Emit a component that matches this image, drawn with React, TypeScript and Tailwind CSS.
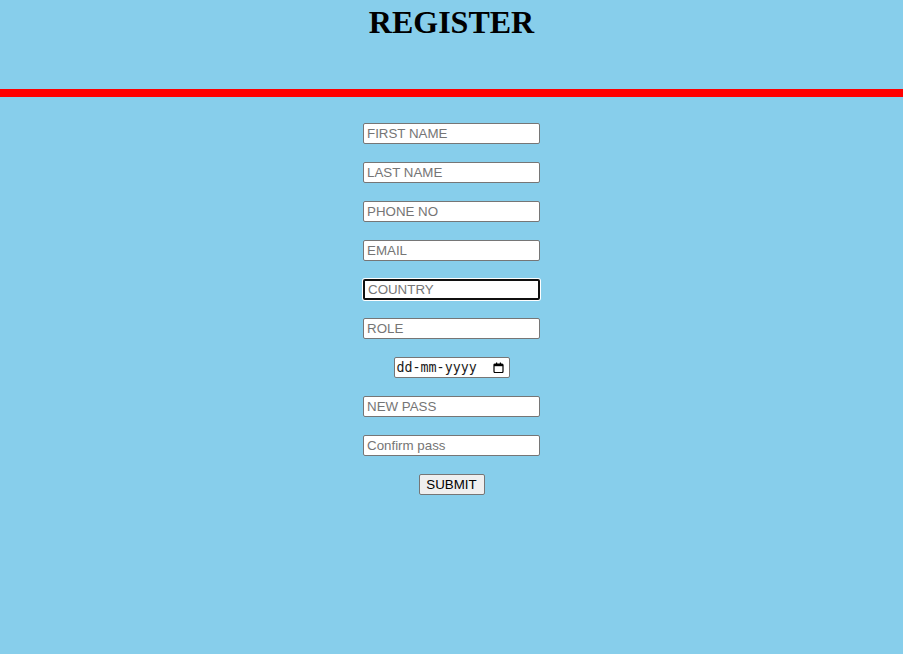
const fields = [
  { name: "first", placeholder: "FIRST NAME" },
  { name: "last", placeholder: "LAST NAME" },
  { name: "phone", placeholder: "PHONE NO" },
  { name: "email", placeholder: "EMAIL" },
  { name: "country", placeholder: "COUNTRY", focused: true },
  { name: "role", placeholder: "ROLE" },
];

const inputBase =
  "w-[177px] h-[21px] bg-white px-[3px] text-[13.33px] text-black placeholder:text-[#757575] font-['Liberation_Sans',Arial,sans-serif] rounded-[2px] outline-none";

const TextField = ({ placeholder, focused }: { placeholder: string; focused?: boolean }) => (
  <input
    type="text"
    placeholder={placeholder}
    className={
      focused
        ? inputBase + " border-2 border-[#101010] shadow-[0_0_0_1px_#ffffff] px-[2px]"
        : inputBase + " border border-[#767676]"
    }
  />
);

// browser date picker, drawn so the dd-mm-yyyy order matches
const DateField = () => (
  <label className="w-[116px] h-[21px] bg-white border border-[#767676] rounded-[2px] pl-[2px] pr-[5px] flex items-center justify-between">
    <span className="text-[13.33px] leading-none text-[#1a1a1a] font-['DejaVu_Sans_Mono',monospace]">
      dd-mm-yyyy
    </span>
    <svg width="11" height="11" viewBox="0 0 11 11" className="text-black">
      <rect x="1" y="2" width="9" height="8.5" rx="1" fill="none" stroke="currentColor" strokeWidth="1.2" />
      <rect x="1" y="2" width="9" height="2.2" fill="currentColor" />
      <rect x="3" y="0.5" width="1.2" height="2" fill="currentColor" />
      <rect x="6.8" y="0.5" width="1.2" height="2" fill="currentColor" />
    </svg>
  </label>
);

const App = () => {
  return (
    <div className="min-h-[654px] bg-[#87ceeb] font-['Liberation_Sans',Arial,sans-serif]">
      <header className="h-[89px] flex justify-center">
        <h1 className="mt-[4px] text-[32px] leading-[37px] font-bold font-['Liberation_Serif','Times_New_Roman',serif] text-black">
          REGISTER
        </h1>
      </header>
      <div className="h-[8px] bg-[#ff0000]" />
      <form
        className="flex flex-col items-center gap-[18px] pt-[26px]"
        onSubmit={(e) => e.preventDefault()}
      >
        {fields.map((f) => (
          <TextField key={f.name} placeholder={f.placeholder} focused={f.focused} />
        ))}
        <DateField />
        <TextField placeholder="NEW PASS" />
        <TextField placeholder="Confirm pass" />
        <button
          type="submit"
          className="w-[66px] h-[21px] bg-[#efefef] border border-[#767676] rounded-[2px] text-[13.33px] leading-none text-black"
        >
          SUBMIT
        </button>
      </form>
    </div>
  );
};

export default App;
